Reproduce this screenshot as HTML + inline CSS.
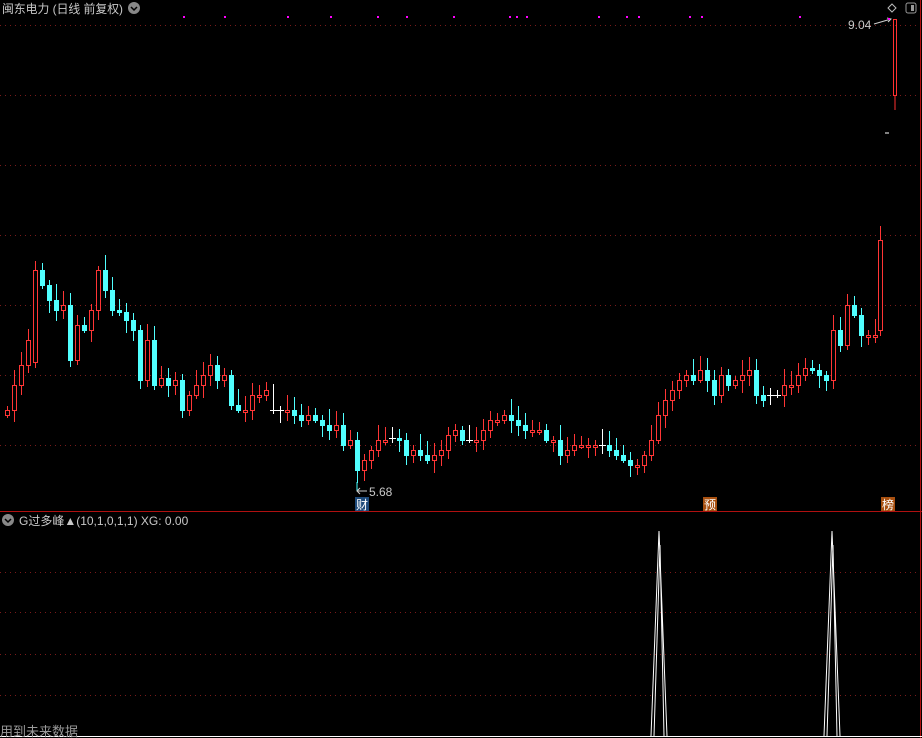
<!DOCTYPE html>
<html><head><meta charset="utf-8"><style>
html,body{margin:0;padding:0;background:#000;width:922px;height:738px;overflow:hidden}
svg{display:block}
text{font-family:"Liberation Sans","Noto Sans CJK SC",sans-serif}
</style></head><body>
<svg id="s" width="922" height="738" xmlns="http://www.w3.org/2000/svg">
<g stroke="#7a1a1a" stroke-dasharray="1,4" stroke-width="1">
<line x1="0" y1="25.5" x2="918" y2="25.5"/><line x1="0" y1="95.5" x2="918" y2="95.5"/>
<line x1="0" y1="165.5" x2="918" y2="165.5"/><line x1="0" y1="235.5" x2="918" y2="235.5"/>
<line x1="0" y1="305.5" x2="918" y2="305.5"/><line x1="0" y1="375.5" x2="918" y2="375.5"/>
<line x1="0" y1="445.5" x2="918" y2="445.5"/>
<line x1="0" y1="572.5" x2="918" y2="572.5"/><line x1="0" y1="612.5" x2="918" y2="612.5"/>
<line x1="0" y1="654.5" x2="918" y2="654.5"/><line x1="0" y1="695.5" x2="918" y2="695.5"/>
</g>
<line x1="0" y1="511.5" x2="922" y2="511.5" stroke="#b01010"/>
<line x1="920.5" y1="0" x2="920.5" y2="738" stroke="#b01010"/>
<line x1="0" y1="736.5" x2="922" y2="736.5" stroke="#fff"/>
<text x="2" y="13" fill="#c8c8c8" font-size="12" textLength="121" lengthAdjust="spacingAndGlyphs">闽东电力 (日线 前复权)</text>
<circle cx="134" cy="8" r="6" fill="#888"/><path d="M131 7l3 3 3-3" stroke="#000" fill="none" stroke-width="1.5"/>
<path d="M892 4l4 4-4 4-4-4z" stroke="#bbb" fill="none"/>
<rect x="906" y="3" width="10" height="10" rx="2" stroke="#999" fill="none"/><rect x="911" y="5" width="3" height="6" fill="#999"/>
<text x="848" y="29" fill="#c8c8c8" font-size="12">9.04</text>
<path d="M874 24l17-5M887 18l4 1-3 3" stroke="#ccc" fill="none"/>
<rect x="888" y="18" width="2" height="2" fill="#f0f"/>
<rect x="893.5" y="19.5" width="3" height="76" stroke="#ff3030" fill="none"/>
<line x1="895" y1="96" x2="895" y2="110" stroke="#ff3030"/>
<line x1="885" y1="133" x2="889" y2="133" stroke="#fff"/>
<g id="c"></g>
<line x1="357" y1="482" x2="357" y2="491" stroke="#4ff"/>
<path d="M357 491h10M360 488l-3 3 3 3" stroke="#ccc" fill="none"/>
<text x="369" y="496" fill="#c8c8c8" font-size="12">5.68</text>
<rect x="355" y="497" width="14" height="14" fill="#1e4a7a"/><text x="356" y="509" fill="#fff" font-size="12">财</text>
<rect x="703" y="497" width="14" height="14" fill="#a85010"/><text x="704" y="509" fill="#fff" font-size="12">预</text>
<rect x="881" y="497" width="14" height="14" fill="#a85010"/><text x="882" y="509" fill="#fff" font-size="12">榜</text>
<circle cx="8" cy="520" r="6" fill="#888"/><path d="M5 519l3 3 3-3" stroke="#000" fill="none" stroke-width="1.5"/>
<text x="19" y="525" fill="#c8c8c8" font-size="12">G过多峰▲(10,1,0,1,1)  XG: 0.00</text>
<g stroke="#fff" fill="none" stroke-width="1">
<path d="M651 736L659 531L667 736M654 736L660 545L664 736"/>
<path d="M824 736L832 531L840 736M827 736L833 545L837 736"/>
</g>
<text x="0" y="736" fill="#9a9a9a" font-size="13">用到未来数据</text>
</svg>
<script>
(function(){
var C=[410,385,365,340,290,285,300,310,305,360,325,330,310,270,290,310,312,320,330,380,340,385,378,385,380,410,395,385,375,365,380,375,405,410,410,395,395,390,410,410,410,415,420,415,420,425,430,425,445,440,470,460,450,440,440,438,440,455,450,455,460,455,450,435,430,440,440,440,430,420,420,415,420,425,430,430,430,440,440,455,450,445,445,445,445,445,450,455,460,465,465,455,440,415,400,390,380,375,380,370,380,395,375,385,380,375,370,395,400,395,395,385,385,375,368,370,375,380,330,345,305,315,335,335,335,300];
var white={38:1,39:1,55:1,66:1,85:1,109:1,110:1};
var g=document.getElementById('c'),h='',prev=415;
for(var i=0;i<C.length;i++){
 var x=7+i*7,c=C[i],o=prev;
 if(i==4){o=362;c=270;}
 if(i==C.length-1){o=330;c=240;x=880;}
 var t=Math.min(o,c),b=Math.max(o,c);
 var hi=t-4-((i*37)%13),lo=b+3+((i*53)%11);
 if(white[i]){h+='<line x1="'+(x+.5)+'" y1="'+hi+'" x2="'+(x+.5)+'" y2="'+lo+'" stroke="#fff"/><line x1="'+(x-3)+'" y1="'+(c+.5)+'" x2="'+(x+4)+'" y2="'+(c+.5)+'" stroke="#fff"/>';prev=c;continue;}
 var col,fill;
 if(c<=o){col='#ff3535';fill='#000';}else{col='#50ffff';fill=col;}
 if(b-t<2)b=t+2;
 h+='<line x1="'+(x+.5)+'" y1="'+hi+'" x2="'+(x+.5)+'" y2="'+lo+'" stroke="'+col+'"/>';
 h+='<rect x="'+(x-1.5)+'" y="'+(t+.5)+'" width="4" height="'+(b-t)+'" stroke="'+col+'" fill="'+fill+'"/>';
 prev=c;
}
var d=[183,224,287,330,377,406,453,509,516,526,598,626,638,689,701,799];
for(var j=0;j<d.length;j++)h+='<rect x="'+d[j]+'" y="16" width="2" height="2" fill="#f0f"/>';
g.innerHTML=h;
})();
</script>
</body></html>
